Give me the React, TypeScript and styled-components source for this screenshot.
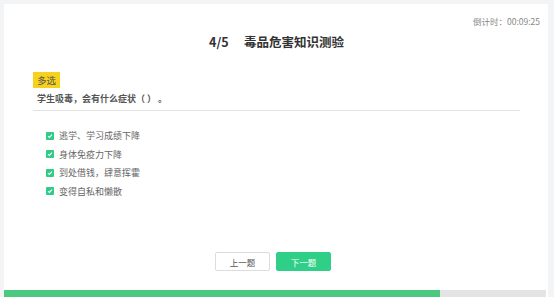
import React from "react";
import styled, { createGlobalStyle } from "styled-components";

const Global = createGlobalStyle`
  html, body { margin: 0; padding: 0; background: #f3f4f6; }
  body { font-family: "Noto Sans CJK SC", "Noto Sans", sans-serif; overflow: hidden; }
  * { box-sizing: border-box; }
`;

const Page = styled.div`
  padding: 4px 6px 0 4px;
  height: 297px;
  display: flex;
`;

const Card = styled.div`
  flex: 1;
  background: #fff;
  display: flex;
  flex-direction: column;
`;

const Body = styled.div`
  flex: 1;
  display: flex;
  flex-direction: column;
  padding: 0 28px 0 29px;
`;

const TimerRow = styled.div`
  display: flex;
  justify-content: flex-end;
  padding-top: 11px;
  margin-right: -20px;
  font-size: 8.5px;
  line-height: 12px;
  color: #888;
`;

const Title = styled.h1`
  margin: 5px 0 0;
  text-align: center;
  font-size: 12.5px;
  line-height: 20px;
  font-weight: 700;
  color: #333;
  white-space: pre;
`;

const Tag = styled.span`
  align-self: flex-start;
  margin-top: 20px;
  background: #f7d21c;
  color: #555;
  font-size: 9.5px;
  line-height: 16px;
  padding: 0 4px;
`;

const Question = styled.div`
  font-size: 9px;
  font-weight: 700;
  color: #555;
  line-height: 14px;
  padding: 4px 0 4px 4px;
  border-bottom: 1px solid #e3e3e3;
  white-space: pre;
`;

const Options = styled.div`
  display: flex;
  flex-direction: column;
  gap: 5.5px;
  padding: 18px 0 0 13px;
`;

const Option = styled.label`
  display: flex;
  align-items: center;
  gap: 5px;
  font-size: 9px;
  line-height: 13px;
  color: #666;
`;

const Check = styled.span`
  width: 8px;
  height: 8px;
  border-radius: 1px;
  background: #2ecc85;
  display: flex;
  align-items: center;
  justify-content: center;
`;

const Buttons = styled.div`
  margin-top: auto;
  display: flex;
  justify-content: center;
  gap: 6px;
  padding-bottom: 19px;
  padding-right: 7px;
`;

const Button = styled.button<{ $primary?: boolean }>`
  width: 55px;
  height: 19px;
  border-radius: 2px;
  font-family: inherit;
  font-size: 8.5px;
  padding: 0;
  cursor: pointer;
  border: 1px solid ${(p) => (p.$primary ? "#2fcf88" : "#dcdcdc")};
  background: ${(p) => (p.$primary ? "#2fcf88" : "#fff")};
  color: ${(p) => (p.$primary ? "#fff" : "#555")};
`;

const Progress = styled.div`
  height: 7px;
  background: #e4e4e4;
  display: flex;
  margin-right: 2px;
`;

const ProgressFill = styled.div`
  background: #4bc97e;
  height: 100%;
`;

const options = ["逃学、学习成绩下降", "身体免疫力下降", "到处借钱，肆意挥霍", "变得自私和懒散"];

export default function App() {
  const progress = 436 / 542;
  return (
    <>
      <Global />
      <Page>
        <Card>
          <Body>
            <TimerRow>倒计时：00:09:25</TimerRow>
            <Title>{"4/5　 毒品危害知识测验"}</Title>
            <Tag>多选</Tag>
            <Question>{"学生吸毒，会有什么症状（ ） 。"}</Question>
            <Options>
              {options.map((o) => (
                <Option key={o}>
                  <Check>
                    <svg width="6" height="6" viewBox="0 0 6 6">
                      <path d="M1 3.1 L2.4 4.4 L5 1.6" fill="none" stroke="#fff" strokeWidth="1.1" />
                    </svg>
                  </Check>
                  {o}
                </Option>
              ))}
            </Options>
            <Buttons>
              <Button>上一题</Button>
              <Button $primary>下一题</Button>
            </Buttons>
          </Body>
          <Progress>
            <ProgressFill style={{ width: `${progress * 100}%` }} />
          </Progress>
        </Card>
      </Page>
    </>
  );
}
